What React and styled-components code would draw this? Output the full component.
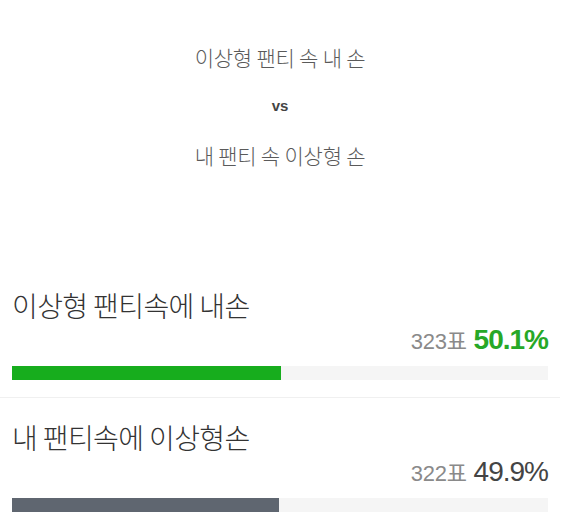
import React from "react";
import styled, { createGlobalStyle } from "styled-components";

const GlobalStyle = createGlobalStyle`
  html, body {
    margin: 0;
    padding: 0;
    background: #ffffff;
  }
  body {
    font-family: "Noto Sans CJK KR", "Liberation Sans", sans-serif;
    -webkit-font-smoothing: antialiased;
  }
`;

const Page = styled.div`
  width: 560px;
`;

const Intro = styled.div`
  display: flex;
  flex-direction: column;
  align-items: center;
  gap: 27px;
  padding-top: 46px;
  margin-bottom: 100px;
`;

const IntroLine = styled.div`
  font-size: 21px;
  font-weight: 300;
  line-height: 22px;
  color: #5a5a5a;
  letter-spacing: -0.2px;
`;

const Versus = styled.div`
  font-family: "Liberation Sans", "Noto Sans CJK KR", sans-serif;
  font-size: 15px;
  font-weight: 700;
  line-height: 22px;
  color: #444444;
`;

const Option = styled.div`
  padding: 22px 12px 17px;
  border-bottom: 1px solid #f0f0f0;
`;

const OptionTitle = styled.div`
  font-size: 28px;
  font-weight: 300;
  line-height: 34px;
  color: #333333;
  letter-spacing: -0.6px;
`;

const Tally = styled.div`
  display: flex;
  justify-content: flex-end;
  align-items: baseline;
  gap: 7px;
  padding-top: 2px;
  line-height: 32px;
  font-family: "Liberation Sans", "Noto Sans CJK KR", sans-serif;
`;

const Votes = styled.span`
  font-size: 22px;
  color: #8a8a8a;
  letter-spacing: -0.3px;
`;

const Percent = styled.span`
  font-size: 28px;
  letter-spacing: -1px;
  font-weight: ${(p) => (p.$lead ? 700 : 400)};
  color: ${(p) => (p.$lead ? "#27a827" : "#444444")};
`;

const Track = styled.div`
  margin-top: 8px;
  height: 14px;
  background: #f5f5f5;
`;

const Fill = styled.div`
  height: 100%;
  background: ${(p) => (p.$lead ? "#17ad1d" : "#5f6670")};
`;

const options = [
  { label: "이상형 팬티속에 내손", votes: 323, pct: 50.1, lead: true },
  { label: "내 팬티속에 이상형손", votes: 322, pct: 49.9, lead: false },
];

export default function App() {
  return (
    <Page>
      <GlobalStyle />
      <Intro>
        <IntroLine>이상형 팬티 속 내 손</IntroLine>
        <Versus>vs</Versus>
        <IntroLine>내 팬티 속 이상형 손</IntroLine>
      </Intro>
      {options.map((o) => (
        <Option key={o.label}>
          <OptionTitle>{o.label}</OptionTitle>
          <Tally>
            <Votes>{o.votes}표</Votes>
            <Percent $lead={o.lead}>{o.pct}%</Percent>
          </Tally>
          <Track>
            <Fill $lead={o.lead} style={{ width: `${o.pct}%` }} />
          </Track>
        </Option>
      ))}
    </Page>
  );
}
